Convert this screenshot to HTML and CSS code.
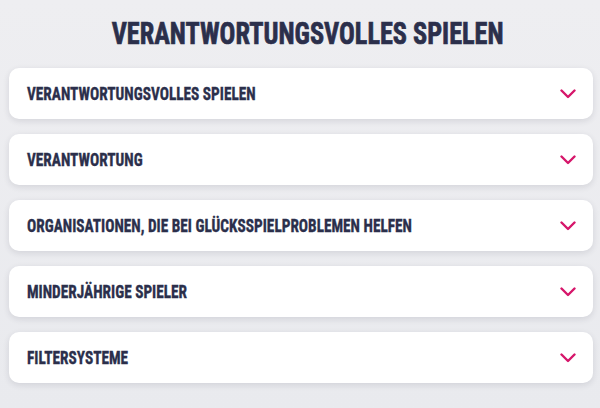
FILE: index.html
```html
<!DOCTYPE html>
<html lang="de">
<head>
<meta charset="utf-8">
<title>Verantwortungsvolles Spielen</title>
<link rel="stylesheet" href="styles.css">
</head>
<body>
<main class="page">
  <h1 class="title"><span class="title-text">VERANTWORTUNGSVOLLES SPIELEN</span></h1>
  <ul class="list">
    <li class="item"><span class="item-text">VERANTWORTUNGSVOLLES SPIELEN</span><svg class="chev" width="16" height="10" viewBox="0 0 16 10"><polyline points="1.5,1.5 8,8 14.5,1.5"/></svg></li>
    <li class="item"><span class="item-text">VERANTWORTUNG</span><svg class="chev" width="16" height="10" viewBox="0 0 16 10"><polyline points="1.5,1.5 8,8 14.5,1.5"/></svg></li>
    <li class="item"><span class="item-text">ORGANISATIONEN, DIE BEI GLÜCKSSPIELPROBLEMEN HELFEN</span><svg class="chev" width="16" height="10" viewBox="0 0 16 10"><polyline points="1.5,1.5 8,8 14.5,1.5"/></svg></li>
    <li class="item"><span class="item-text">MINDERJÄHRIGE SPIELER</span><svg class="chev" width="16" height="10" viewBox="0 0 16 10"><polyline points="1.5,1.5 8,8 14.5,1.5"/></svg></li>
    <li class="item"><span class="item-text">FILTERSYSTEME</span><svg class="chev" width="16" height="10" viewBox="0 0 16 10"><polyline points="1.5,1.5 8,8 14.5,1.5"/></svg></li>
  </ul>
</main>
</body>
</html>
```
FILE: styles.css
```css
html,body{margin:0;padding:0}
body{
  background:linear-gradient(180deg,#eeeef1 0%,#e9eaee 100%);
  font-family:"Roboto Condensed","Roboto","DejaVu Sans Condensed",sans-serif;
  font-weight:700;
  color:#2b2f4b;
  width:600px;height:408px;overflow:hidden;
}
.page{padding:0 7px 0 9px}
.title{
  margin:0;height:68px;
  display:flex;align-items:center;justify-content:center;
  padding-left:13px;box-sizing:border-box;
  font-size:31px;line-height:1;font-weight:700;
}
.title-text{
  display:inline-block;transform:scaleX(0.846);white-space:nowrap;
  padding-bottom:1px;-webkit-text-stroke:0.7px #2b2f4b;
}
.list{list-style:none;margin:0;padding:0;display:flex;flex-direction:column;gap:15px}
.item{
  height:51px;background:#fff;border-radius:10px;
  box-shadow:0 2px 6px rgba(30,35,60,.12);
  display:flex;align-items:center;justify-content:space-between;
  padding:0 17px 0 18px;
}
.item-text{
  display:inline-block;font-size:18px;line-height:1;
  transform:scaleX(0.85);transform-origin:left center;white-space:nowrap;
  -webkit-text-stroke:0.35px #2b2f4b;
}
.chev{display:block}
.chev polyline{fill:none;stroke:#d6166a;stroke-width:2.4;stroke-linecap:round;stroke-linejoin:round}
```
